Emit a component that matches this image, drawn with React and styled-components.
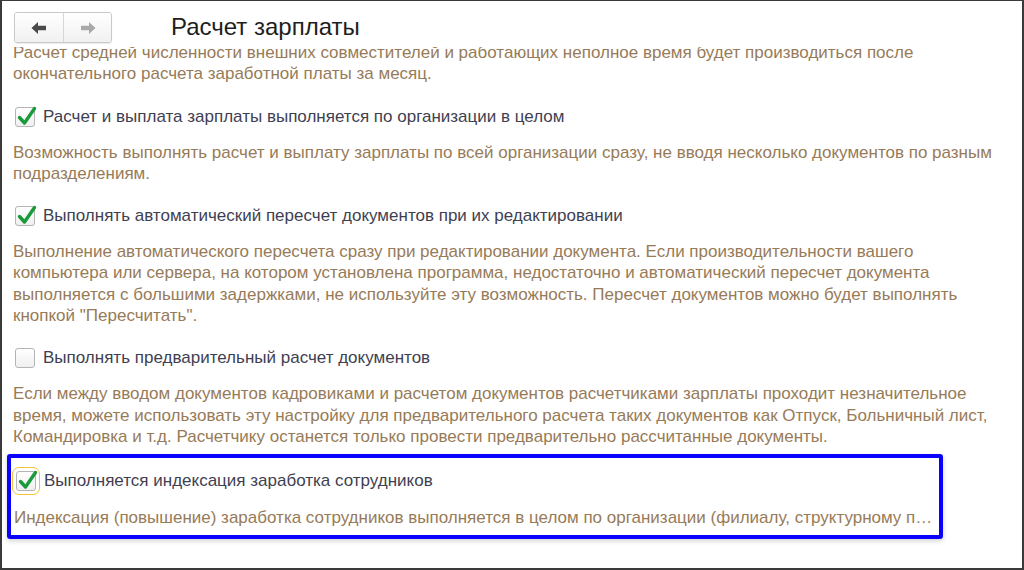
import React from 'react'
import styled, { createGlobalStyle } from 'styled-components'

const GlobalStyle = createGlobalStyle`
  html, body {
    margin: 0;
    padding: 0;
    background: #ffffff;
  }
  * {
    box-sizing: border-box;
  }
`

const Frame = styled.div`
  width: 1024px;
  height: 570px;
  border: 2px solid #3a3a3a;
  border-top-width: 1px;
  background: #ffffff;
  display: flex;
  flex-direction: column;
  overflow: hidden;
  font-family: Arial, "Liberation Sans", sans-serif;
`

const Header = styled.div`
  height: 46px;
  flex: none;
  display: flex;
  align-items: flex-start;
  padding: 11px 0 0 12px;
  background: #ffffff;
  position: relative;
  z-index: 1;
`

const NavGroup = styled.div`
  display: flex;
  height: 31px;
  border: 1px solid #c9c9c9;
  border-radius: 3px;
  overflow: hidden;
  box-shadow: 0 1px 1px rgba(0, 0, 0, 0.08);
`

const NavButton = styled.div`
  width: 48px;
  display: flex;
  align-items: center;
  justify-content: center;
  background: linear-gradient(#ffffff, #f1f1f1);
  & + & {
    border-left: 1px solid #d6d6d6;
  }
`

const Title = styled.h1`
  margin: 1px 0 0 59px;
  font-size: 24px;
  line-height: 28px;
  font-weight: normal;
  color: #1e1e1e;
`

const Content = styled.div`
  flex: 1;
  overflow: hidden;
  padding: 0 10px 0 11px;
`

const List = styled.div`
  display: flex;
  flex-direction: column;
  gap: 21px;
  margin-top: -5px;
`

const Item = styled.div`
  display: flex;
  flex-direction: column;
  gap: 14px;
  ${({ $highlight }) => $highlight && `
    width: 936px;
    margin: -14px 0 0 -6px;
    padding: 12px 2px 6px 3px;
    border: 4px solid #0a00ff;
    border-radius: 3px;
    box-shadow: 0 2px 5px rgba(0, 0, 0, 0.18);
    gap: 15px;
  `}
`

const Row = styled.label`
  display: flex;
  align-items: center;
  gap: 8px;
  height: 22px;
  padding-left: 2px;
`

const Box = styled.span`
  position: relative;
  width: 20px;
  height: 20px;
  flex: none;
  border: 1px solid #b4b4b4;
  border-radius: 3px;
  background: linear-gradient(#ffffff, #f0f0f0);
  ${({ $focus }) => $focus && `
    outline: 1px solid #f2c335;
    outline-offset: 3px;
  `}
`

const Tick = styled.svg`
  position: absolute;
  left: 1px;
  top: -3px;
`

const Label = styled.span`
  font-size: 17px;
  color: #3f3f52;
  white-space: nowrap;
`

const Note = styled.p`
  margin: 0;
  font-size: 17px;
  line-height: 21.3px;
  color: #977b58;
  ${({ $clip }) => $clip && `
    white-space: nowrap;
    overflow: hidden;
    text-overflow: ellipsis;
  `}
`

const Arrow = ({ left, color }) => (
  <svg width="16" height="14" viewBox="0 0 16 14">
    <g transform={left ? '' : 'translate(16 0) scale(-1 1)'} fill={color}>
      <path d="M0.5 7 L7 1 L7 4.8 L15 4.8 L15 9.2 L7 9.2 L7 13 Z" />
    </g>
  </svg>
)

const Checkbox = ({ checked, focus }) => (
  <Box $focus={focus}>
    {checked && (
      <Tick width="20" height="22" viewBox="0 0 20 22">
        <path
          d="M2.5 12.5 L7.5 18 L17.5 3.5"
          fill="none"
          stroke="#1b9a3c"
          strokeWidth="3.4"
          strokeLinecap="round"
          strokeLinejoin="round"
        />
      </Tick>
    )}
  </Box>
)

const options = [
  {
    label: 'Расчет и выплата зарплаты выполняется по организации в целом',
    checked: true,
    note: 'Возможность выполнять расчет и выплату зарплаты по всей организации сразу, не вводя несколько документов по разным подразделениям.'
  },
  {
    label: 'Выполнять автоматический пересчет документов при их редактировании',
    checked: true,
    note: 'Выполнение автоматического пересчета сразу при редактировании документа. Если производительности вашего компьютера или сервера, на котором установлена программа, недостаточно и автоматический пересчет документа выполняется с большими задержками, не используйте эту возможность. Пересчет документов можно будет выполнять кнопкой "Пересчитать".'
  },
  {
    label: 'Выполнять предварительный расчет документов',
    checked: false,
    note: 'Если между вводом документов кадровиками и расчетом документов расчетчиками зарплаты проходит незначительное время, можете использовать эту настройку для предварительного расчета таких документов как Отпуск, Больничный лист, Командировка и т.д. Расчетчику останется только провести предварительно рассчитанные документы.'
  },
  {
    label: 'Выполняется индексация заработка сотрудников',
    checked: true,
    focus: true,
    clip: true,
    note: 'Индексация (повышение) заработка сотрудников выполняется в целом по организации (филиалу, структурному подразделению).'
  }
]

export default function App () {
  return (
    <>
      <GlobalStyle />
      <Frame>
        <Header>
          <NavGroup>
            <NavButton><Arrow left color="#4a4a4a" /></NavButton>
            <NavButton><Arrow color="#a9a9a9" /></NavButton>
          </NavGroup>
          <Title>Расчет зарплаты</Title>
        </Header>
        <Content>
          <List>
            <Note>
              Расчет средней численности внешних совместителей и работающих неполное время будет производиться после окончательного расчета заработной платы за месяц.
            </Note>
            {options.map(opt => (
              <Item key={opt.label} $highlight={opt.focus}>
                <Row>
                  <Checkbox checked={opt.checked} focus={opt.focus} />
                  <Label>{opt.label}</Label>
                </Row>
                <Note $clip={opt.clip}>{opt.note}</Note>
              </Item>
            ))}
          </List>
        </Content>
      </Frame>
    </>
  )
}
